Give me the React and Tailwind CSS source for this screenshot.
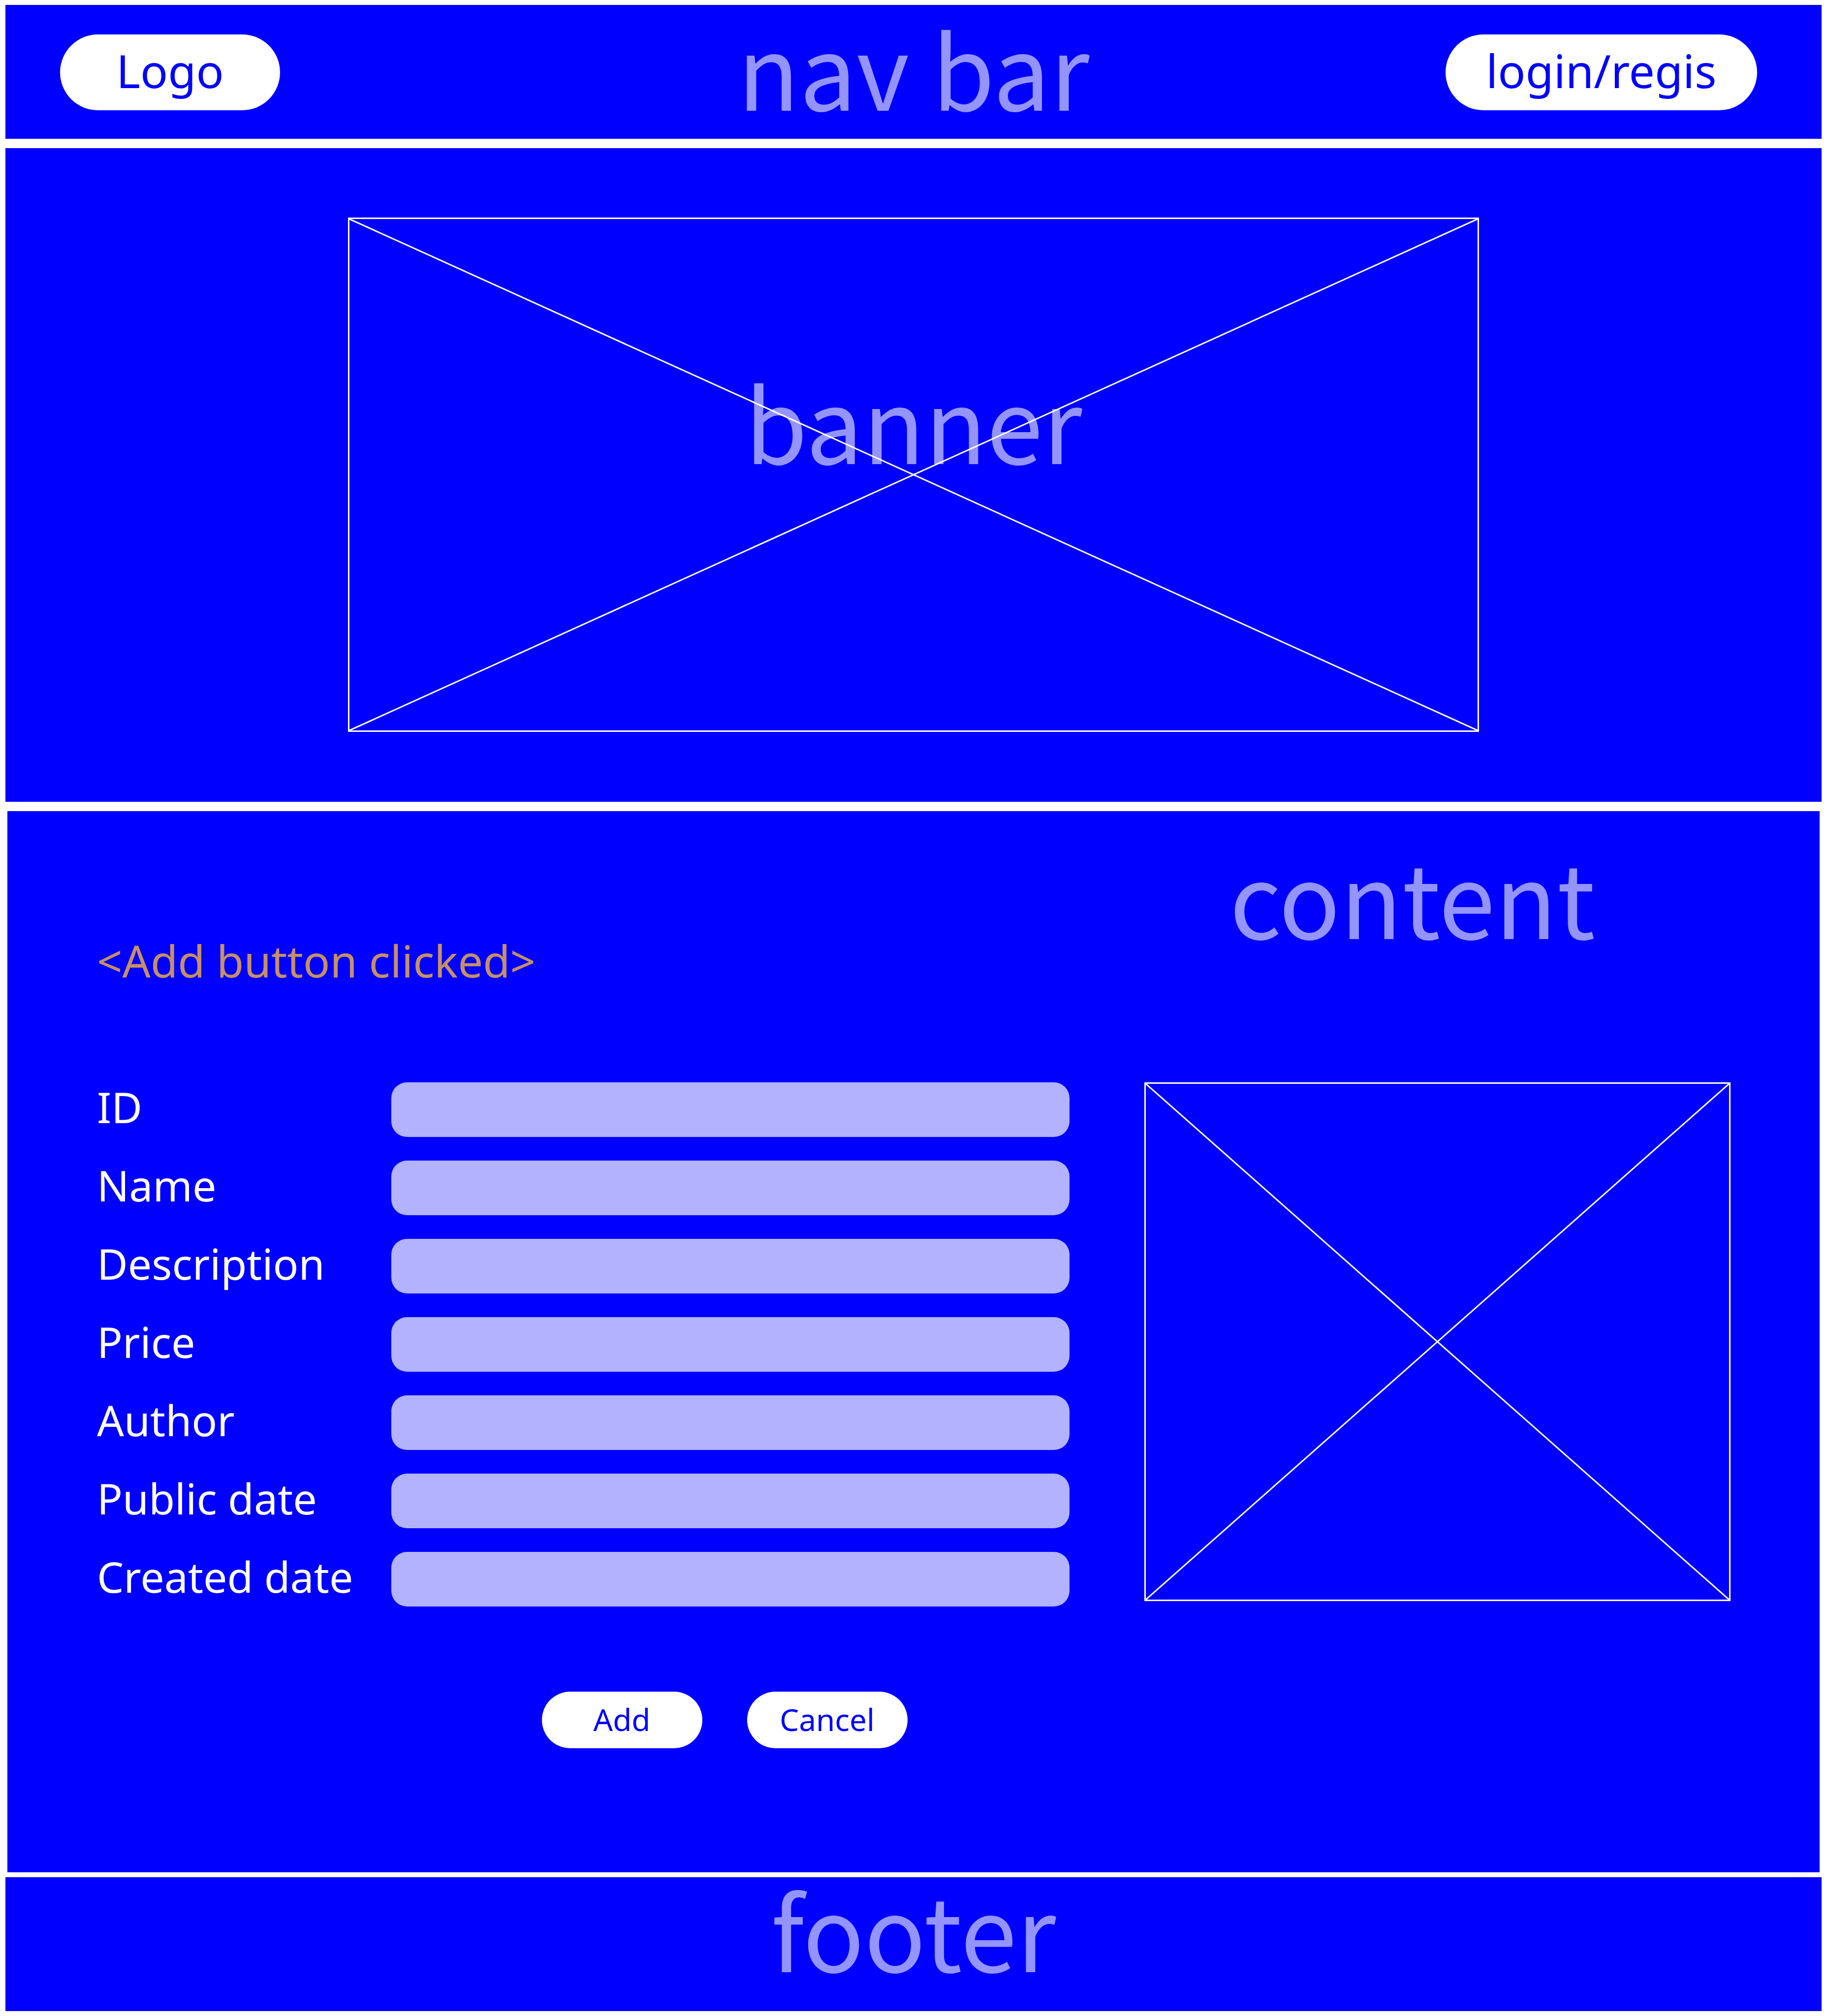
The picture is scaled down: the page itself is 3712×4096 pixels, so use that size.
const FIELDS = [
  { id: 'id', label: 'ID' },
  { id: 'name', label: 'Name' },
  { id: 'description', label: 'Description' },
  { id: 'price', label: 'Price' },
  { id: 'author', label: 'Author' },
  { id: 'public-date', label: 'Public date' },
  { id: 'created-date', label: 'Created date' },
];

function Cross() {
  return (
    <svg className="absolute inset-0 h-full w-full" preserveAspectRatio="none" viewBox="0 0 100 100" aria-hidden="true">
      <path d="M0 0 L100 100 M100 0 L0 100" fill="none" stroke="#fff" strokeWidth="3" vectorEffect="non-scaling-stroke" />
    </svg>
  );
}

function Heading({ children }) {
  return (
    <h2 className="font-['Noto_Sans_CJK_SC','Noto_Sans',sans-serif] text-[206px] leading-[240px] whitespace-nowrap text-[#9494ff]">
      {children}
    </h2>
  );
}

export default function App() {
  return (
    <div className="flex min-h-screen flex-col bg-white px-[11px] py-[10px] font-['Noto_Sans',sans-serif] text-white">
      <header className="mb-[19px] grid h-[272px] grid-cols-[1fr_auto_1fr] items-center bg-[#0000ff] px-[111px] pt-[2px]">
        <a href="#home" className="flex h-[154px] w-[447px] items-center justify-center rounded-full bg-white pb-2 text-[93px] leading-[120px] text-[#0000ff]">
          Logo
        </a>
        <div className="pb-6">
          <Heading>nav bar</Heading>
        </div>
        <button type="button" className="mr-5 flex h-[154px] w-[633px] items-center justify-center justify-self-end rounded-full bg-white pb-2 text-[93px] leading-[120px] text-[#0000ff]">
          login/regis
        </button>
      </header>

      <section className="mb-[19px] bg-[#0000ff] px-[696px] pt-[141px] pb-[142px]">
        <div className="relative flex h-[1045px] justify-center border-3 border-white pt-[288px]">
          <Heading>banner</Heading>
          <Cross />
        </div>
      </section>

      <main className="mx-1 mb-[10px] grow bg-[#0000ff] pt-[50px] pr-[181px] pb-[252px] pl-[182px]">
        <div className="grid h-[308px] grid-cols-[1976fr_1191fr] gap-x-[152px]">
          <p className="self-end text-[90px] leading-[110px] text-[#c69063]">&lt;Add button clicked&gt;</p>
          <div className="flex justify-center pr-[102px]">
            <Heading>content</Heading>
          </div>
        </div>
        <div className="mt-[193px] grid grid-cols-[1976fr_1191fr] gap-x-[152px]">
          <form className="flex flex-col gap-12" onSubmit={(e) => e.preventDefault()}>
            {FIELDS.map((f) => (
              <div key={f.id} className="flex h-[111px] items-center">
                <label htmlFor={f.id} className="w-[598px] shrink-0 pb-3 text-[86px] leading-[110px]">
                  {f.label}
                </label>
                <input id={f.id} type="text" className="h-[111px] min-w-0 grow rounded-[32px] bg-[#b2b2ff] px-8 text-[62px] text-[#0000ff]" />
              </div>
            ))}
            <div className="mt-[125px] ml-[598px] flex justify-center gap-[91px] pr-6">
              <button type="submit" className="h-[115px] w-[326px] rounded-full bg-white pb-1 text-[62px] leading-[84px] text-[#0000ff]">Add</button>
              <button type="button" className="h-[115px] w-[326px] rounded-full bg-white pb-1 text-[62px] leading-[84px] text-[#0000ff]">Cancel</button>
            </div>
          </form>
          <div className="relative h-[1054px] border-3 border-white">
            <Cross />
          </div>
        </div>
      </main>

      <footer className="flex h-[272px] items-center justify-center bg-[#0000ff] pb-[66px]">
        <Heading>footer</Heading>
      </footer>
    </div>
  );
}
